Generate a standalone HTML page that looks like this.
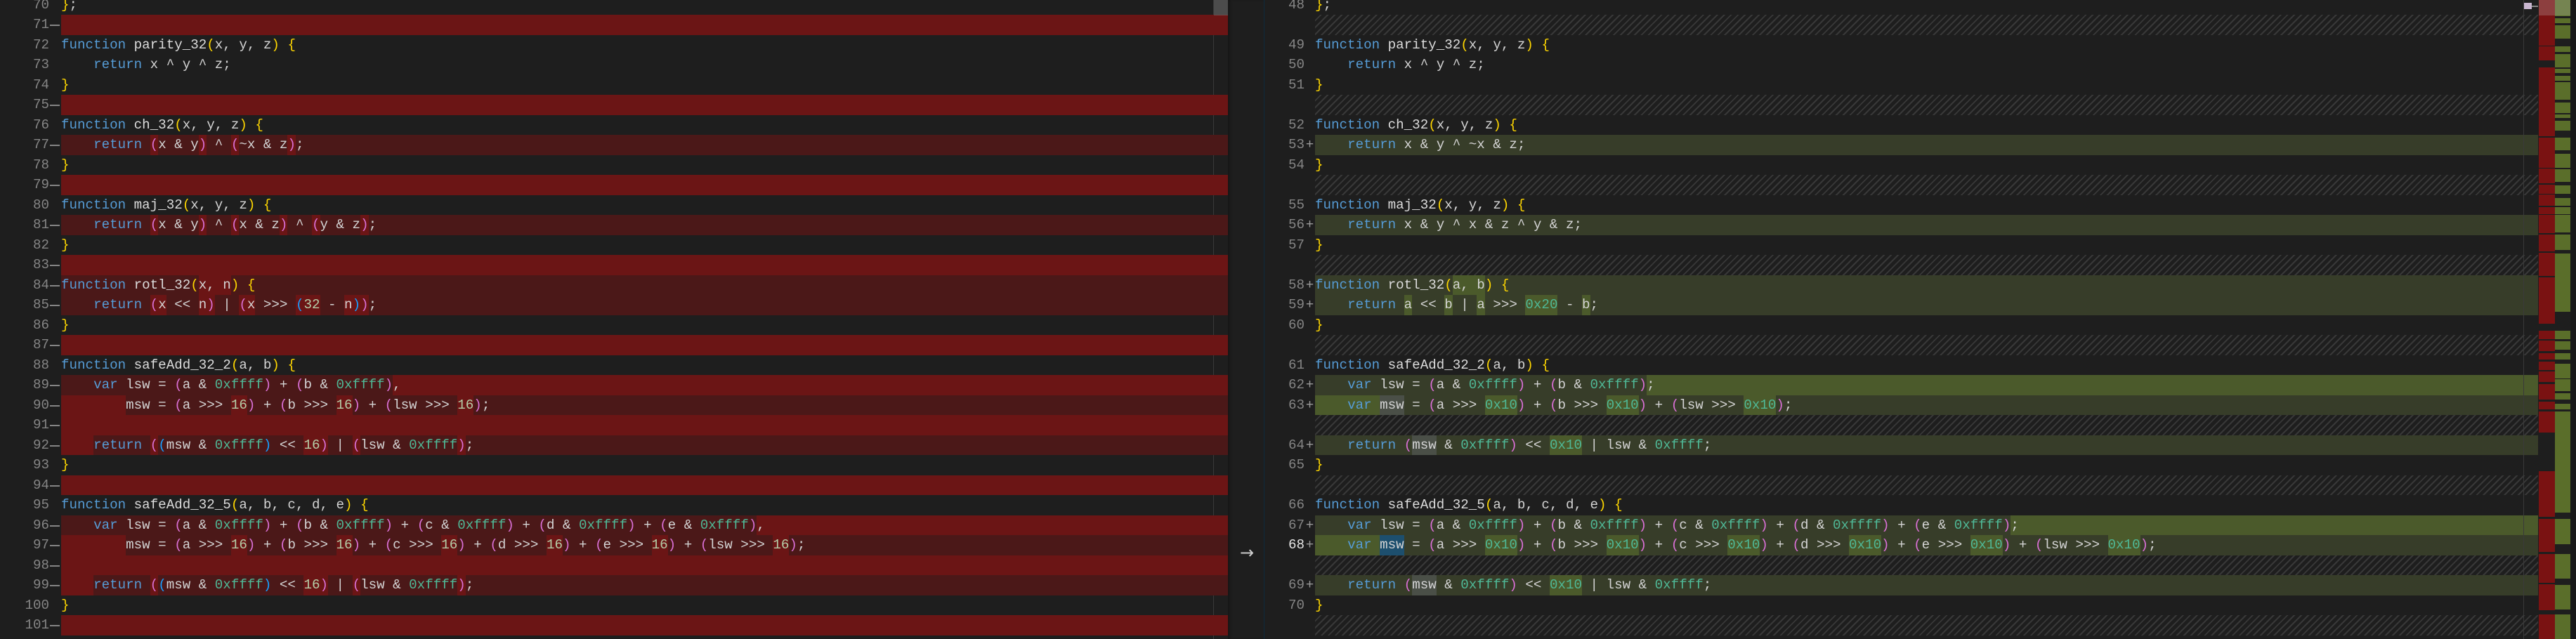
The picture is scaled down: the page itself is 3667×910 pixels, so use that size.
<!DOCTYPE html>
<html><head><meta charset="utf-8">
<style>
html,body{margin:0;padding:0;background:#1e1e1e;}
body{width:3667px;height:910px;overflow:hidden;position:relative;font-family:"Liberation Mono",monospace;font-size:19.2px;color:#d4d4d4;}
.r{position:absolute;height:28.5px;line-height:28.5px;white-space:pre;overflow:hidden;}
.L{left:87px;width:1661px;}
.R{left:1872px;width:1741px;}
.ln{position:absolute;height:28.5px;line-height:28.5px;color:#858585;text-align:right;}
.lnL{left:0;width:70px;}
.lnR{left:1800px;width:57px;}
.mk{position:absolute;left:71px;width:14px;height:2px;background:#858585;}
.pl{position:absolute;left:1857px;width:15px;height:28.5px;line-height:28.5px;color:#9a9a9a;text-align:center;}
.full{background:#6b1515;}
.chg{background:#4b1818;}
.add{background:#373d29;}
.hat{background:repeating-linear-gradient(135deg,#1e1e1e 0 5px,#383838 5px 7px);}
.D{display:inline-block;height:28.5px;background:#6b1515;vertical-align:top;}
.A{display:inline-block;height:28.5px;background:#4b5a2b;vertical-align:top;}
.G{display:inline-block;height:28.5px;background:#4a4f47;vertical-align:top;}
.S{display:inline-block;height:28.5px;background:#1d4f6e;vertical-align:top;}
.k{color:#569cd6}.f{color:#dcdcdc}.b{color:#ffd700}.p{color:#da70d6}.q{color:#179fff}.n{color:#4fb896}.d{color:#b5cea8}
.tail{display:inline-block;width:3000px;height:28.5px;vertical-align:top;}
</style></head><body>

<div style="position:absolute;left:1727px;top:0;width:1px;height:910px;background:#3a3a3a;"></div>
<div style="position:absolute;left:1748px;top:0;width:51px;height:910px;background:#1e1e1e;box-shadow:inset 4px 0 4px -2px #141414;"></div>
<div style="position:absolute;left:1799px;top:0;width:1px;height:910px;background:#0e2a3e;"></div>
<div style="position:absolute;left:1760px;top:772px;width:30px;text-align:center;color:#cfcfcf;font-family:'DejaVu Sans',sans-serif;font-size:24px;line-height:30px;">→</div>

<div class="ln lnL" style="top:-7.5px">70</div><div class="r L" style="top:-7.5px"><span class="b">}</span>;</div>
<div class="ln lnL" style="top:21px">71</div><div class="mk" style="top:35px"></div><div class="r L full" style="top:21px"></div>
<div class="ln lnL" style="top:49.5px">72</div><div class="r L" style="top:49.5px"><span class="k">function</span> <span class="f">parity_32</span><span class="b">(</span>x, y, z<span class="b">)</span> <span class="b">{</span></div>
<div class="ln lnL" style="top:78px">73</div><div class="r L" style="top:78px">    <span class="k">return</span> x ^ y ^ z;</div>
<div class="ln lnL" style="top:106.5px">74</div><div class="r L" style="top:106.5px"><span class="b">}</span></div>
<div class="ln lnL" style="top:135px">75</div><div class="mk" style="top:149px"></div><div class="r L full" style="top:135px"></div>
<div class="ln lnL" style="top:163.5px">76</div><div class="r L" style="top:163.5px"><span class="k">function</span> <span class="f">ch_32</span><span class="b">(</span>x, y, z<span class="b">)</span> <span class="b">{</span></div>
<div class="ln lnL" style="top:192px">77</div><div class="mk" style="top:206px"></div><div class="r L chg" style="top:192px">    <span class="k">return</span> <span class="D"><span class="p">(</span></span>x &amp; y<span class="D"><span class="p">)</span></span> ^ <span class="D"><span class="p">(</span></span>~x &amp; z<span class="D"><span class="p">)</span></span>;</div>
<div class="ln lnL" style="top:220.5px">78</div><div class="r L" style="top:220.5px"><span class="b">}</span></div>
<div class="ln lnL" style="top:249px">79</div><div class="mk" style="top:263px"></div><div class="r L full" style="top:249px"></div>
<div class="ln lnL" style="top:277.5px">80</div><div class="r L" style="top:277.5px"><span class="k">function</span> <span class="f">maj_32</span><span class="b">(</span>x, y, z<span class="b">)</span> <span class="b">{</span></div>
<div class="ln lnL" style="top:306px">81</div><div class="mk" style="top:320px"></div><div class="r L chg" style="top:306px">    <span class="k">return</span> <span class="D"><span class="p">(</span></span>x &amp; y<span class="D"><span class="p">)</span></span> ^ <span class="D"><span class="p">(</span></span>x &amp; z<span class="D"><span class="p">)</span></span> ^ <span class="D"><span class="p">(</span></span>y &amp; z<span class="D"><span class="p">)</span></span>;</div>
<div class="ln lnL" style="top:334.5px">82</div><div class="r L" style="top:334.5px"><span class="b">}</span></div>
<div class="ln lnL" style="top:363px">83</div><div class="mk" style="top:377px"></div><div class="r L full" style="top:363px"></div>
<div class="ln lnL" style="top:391.5px">84</div><div class="mk" style="top:405.5px"></div><div class="r L chg" style="top:391.5px"><span class="k">function</span> <span class="f">rotl_32</span><span class="b">(</span><span class="D">x, n</span><span class="b">)</span> <span class="b">{</span></div>
<div class="ln lnL" style="top:420px">85</div><div class="mk" style="top:434px"></div><div class="r L chg" style="top:420px">    <span class="k">return</span> <span class="D"><span class="p">(</span>x</span> &lt;&lt; <span class="D">n<span class="p">)</span></span> | <span class="D"><span class="p">(</span>x</span> &gt;&gt;&gt; <span class="D"><span class="q">(</span><span class="d">32</span></span> - <span class="D">n<span class="q">)</span><span class="p">)</span></span>;</div>
<div class="ln lnL" style="top:448.5px">86</div><div class="r L" style="top:448.5px"><span class="b">}</span></div>
<div class="ln lnL" style="top:477px">87</div><div class="mk" style="top:491px"></div><div class="r L full" style="top:477px"></div>
<div class="ln lnL" style="top:505.5px">88</div><div class="r L" style="top:505.5px"><span class="k">function</span> <span class="f">safeAdd_32_2</span><span class="b">(</span>a, b<span class="b">)</span> <span class="b">{</span></div>
<div class="ln lnL" style="top:534px">89</div><div class="mk" style="top:548px"></div><div class="r L chg" style="top:534px">    <span class="k">var</span> lsw = <span class="p">(</span>a &amp; <span class="n">0xffff</span><span class="p">)</span> + <span class="p">(</span>b &amp; <span class="n">0xffff</span><span class="p">)</span><span class="D">,</span><span class="D tail"></span></div>
<div class="ln lnL" style="top:562.5px">90</div><div class="mk" style="top:576.5px"></div><div class="r L chg" style="top:562.5px"><span class="D">        </span>msw = <span class="p">(</span>a &gt;&gt;&gt; <span class="D"><span class="d">16</span></span><span class="p">)</span> + <span class="p">(</span>b &gt;&gt;&gt; <span class="D"><span class="d">16</span></span><span class="p">)</span> + <span class="p">(</span>lsw &gt;&gt;&gt; <span class="D"><span class="d">16</span></span><span class="p">)</span>;</div>
<div class="ln lnL" style="top:591px">91</div><div class="mk" style="top:605px"></div><div class="r L full" style="top:591px"></div>
<div class="ln lnL" style="top:619.5px">92</div><div class="mk" style="top:633.5px"></div><div class="r L chg" style="top:619.5px"><span class="D">    </span><span class="k">return</span> <span class="D"><span class="p">(</span></span><span class="q">(</span>msw &amp; <span class="n">0xffff</span><span class="q">)</span> &lt;&lt; <span class="D"><span class="d">16</span><span class="p">)</span></span> | <span class="D"><span class="p">(</span></span>lsw &amp; <span class="n">0xffff</span><span class="D"><span class="p">)</span></span>;</div>
<div class="ln lnL" style="top:648px">93</div><div class="r L" style="top:648px"><span class="b">}</span></div>
<div class="ln lnL" style="top:676.5px">94</div><div class="mk" style="top:690.5px"></div><div class="r L full" style="top:676.5px"></div>
<div class="ln lnL" style="top:705px">95</div><div class="r L" style="top:705px"><span class="k">function</span> <span class="f">safeAdd_32_5</span><span class="b">(</span>a, b, c, d, e<span class="b">)</span> <span class="b">{</span></div>
<div class="ln lnL" style="top:733.5px">96</div><div class="mk" style="top:747.5px"></div><div class="r L chg" style="top:733.5px">    <span class="k">var</span> lsw = <span class="p">(</span>a &amp; <span class="n">0xffff</span><span class="p">)</span> + <span class="p">(</span>b &amp; <span class="n">0xffff</span><span class="p">)</span> + <span class="p">(</span>c &amp; <span class="n">0xffff</span><span class="p">)</span> + <span class="p">(</span>d &amp; <span class="n">0xffff</span><span class="p">)</span> + <span class="p">(</span>e &amp; <span class="n">0xffff</span><span class="p">)</span><span class="D">,</span><span class="D tail"></span></div>
<div class="ln lnL" style="top:762px">97</div><div class="mk" style="top:776px"></div><div class="r L chg" style="top:762px"><span class="D">        </span>msw = <span class="p">(</span>a &gt;&gt;&gt; <span class="D"><span class="d">16</span></span><span class="p">)</span> + <span class="p">(</span>b &gt;&gt;&gt; <span class="D"><span class="d">16</span></span><span class="p">)</span> + <span class="p">(</span>c &gt;&gt;&gt; <span class="D"><span class="d">16</span></span><span class="p">)</span> + <span class="p">(</span>d &gt;&gt;&gt; <span class="D"><span class="d">16</span></span><span class="p">)</span> + <span class="p">(</span>e &gt;&gt;&gt; <span class="D"><span class="d">16</span></span><span class="p">)</span> + <span class="p">(</span>lsw &gt;&gt;&gt; <span class="D"><span class="d">16</span></span><span class="p">)</span>;</div>
<div class="ln lnL" style="top:790.5px">98</div><div class="mk" style="top:804.5px"></div><div class="r L full" style="top:790.5px"></div>
<div class="ln lnL" style="top:819px">99</div><div class="mk" style="top:833px"></div><div class="r L chg" style="top:819px"><span class="D">    </span><span class="k">return</span> <span class="D"><span class="p">(</span></span><span class="q">(</span>msw &amp; <span class="n">0xffff</span><span class="q">)</span> &lt;&lt; <span class="D"><span class="d">16</span><span class="p">)</span></span> | <span class="D"><span class="p">(</span></span>lsw &amp; <span class="n">0xffff</span><span class="D"><span class="p">)</span></span>;</div>
<div class="ln lnL" style="top:847.5px">100</div><div class="r L" style="top:847.5px"><span class="b">}</span></div>
<div class="ln lnL" style="top:876px">101</div><div class="mk" style="top:890px"></div><div class="r L full" style="top:876px"></div>

<div style="position:absolute;left:1728px;top:0;width:20px;height:22px;background:rgba(121,121,121,0.5);"></div>

<div class="ln lnR" style="top:-7.5px">48</div><div class="r R" style="top:-7.5px"><span class="b">}</span>;</div>
<div class="r R hat" style="top:21px"></div>
<div class="ln lnR" style="top:49.5px">49</div><div class="r R" style="top:49.5px"><span class="k">function</span> <span class="f">parity_32</span><span class="b">(</span>x, y, z<span class="b">)</span> <span class="b">{</span></div>
<div class="ln lnR" style="top:78px">50</div><div class="r R" style="top:78px">    <span class="k">return</span> x ^ y ^ z;</div>
<div class="ln lnR" style="top:106.5px">51</div><div class="r R" style="top:106.5px"><span class="b">}</span></div>
<div class="r R hat" style="top:135px"></div>
<div class="ln lnR" style="top:163.5px">52</div><div class="r R" style="top:163.5px"><span class="k">function</span> <span class="f">ch_32</span><span class="b">(</span>x, y, z<span class="b">)</span> <span class="b">{</span></div>
<div class="ln lnR" style="top:192px">53</div><div class="pl" style="top:192px">+</div><div class="r R add" style="top:192px">    <span class="k">return</span> x &amp; y ^ ~x &amp; z;</div>
<div class="ln lnR" style="top:220.5px">54</div><div class="r R" style="top:220.5px"><span class="b">}</span></div>
<div class="r R hat" style="top:249px"></div>
<div class="ln lnR" style="top:277.5px">55</div><div class="r R" style="top:277.5px"><span class="k">function</span> <span class="f">maj_32</span><span class="b">(</span>x, y, z<span class="b">)</span> <span class="b">{</span></div>
<div class="ln lnR" style="top:306px">56</div><div class="pl" style="top:306px">+</div><div class="r R add" style="top:306px">    <span class="k">return</span> x &amp; y ^ x &amp; z ^ y &amp; z;</div>
<div class="ln lnR" style="top:334.5px">57</div><div class="r R" style="top:334.5px"><span class="b">}</span></div>
<div class="r R hat" style="top:363px"></div>
<div class="ln lnR" style="top:391.5px">58</div><div class="pl" style="top:391.5px">+</div><div class="r R add" style="top:391.5px"><span class="k">function</span> <span class="f">rotl_32</span><span class="b">(</span><span class="A">a, b</span><span class="b">)</span> <span class="b">{</span></div>
<div class="ln lnR" style="top:420px">59</div><div class="pl" style="top:420px">+</div><div class="r R add" style="top:420px">    <span class="k">return</span> <span class="A">a</span> &lt;&lt; <span class="A">b</span> | <span class="A">a</span> &gt;&gt;&gt; <span class="A"><span class="n">0x20</span></span> - <span class="A">b</span>;</div>
<div class="ln lnR" style="top:448.5px">60</div><div class="r R" style="top:448.5px"><span class="b">}</span></div>
<div class="r R hat" style="top:477px"></div>
<div class="ln lnR" style="top:505.5px">61</div><div class="r R" style="top:505.5px"><span class="k">function</span> <span class="f">safeAdd_32_2</span><span class="b">(</span>a, b<span class="b">)</span> <span class="b">{</span></div>
<div class="ln lnR" style="top:534px">62</div><div class="pl" style="top:534px">+</div><div class="r R add" style="top:534px">    <span class="k">var</span> lsw = <span class="p">(</span>a &amp; <span class="n">0xffff</span><span class="p">)</span> + <span class="p">(</span>b &amp; <span class="n">0xffff</span><span class="p">)</span><span class="A">;</span><span class="A tail"></span></div>
<div class="ln lnR" style="top:562.5px">63</div><div class="pl" style="top:562.5px">+</div><div class="r R add" style="top:562.5px"><span class="A">    <span class="k">var</span> </span><span class="G">msw</span> = <span class="p">(</span>a &gt;&gt;&gt; <span class="A"><span class="n">0x10</span></span><span class="p">)</span> + <span class="p">(</span>b &gt;&gt;&gt; <span class="A"><span class="n">0x10</span></span><span class="p">)</span> + <span class="p">(</span>lsw &gt;&gt;&gt; <span class="A"><span class="n">0x10</span></span><span class="p">)</span>;</div>
<div class="r R hat" style="top:591px"></div>
<div class="ln lnR" style="top:619.5px">64</div><div class="pl" style="top:619.5px">+</div><div class="r R add" style="top:619.5px">    <span class="k">return</span> <span class="p">(</span><span class="G">msw</span> &amp; <span class="n">0xffff</span><span class="p">)</span> &lt;&lt; <span class="A"><span class="n">0x10</span></span> | lsw &amp; <span class="n">0xffff</span>;</div>
<div class="ln lnR" style="top:648px">65</div><div class="r R" style="top:648px"><span class="b">}</span></div>
<div class="r R hat" style="top:676.5px"></div>
<div class="ln lnR" style="top:705px">66</div><div class="r R" style="top:705px"><span class="k">function</span> <span class="f">safeAdd_32_5</span><span class="b">(</span>a, b, c, d, e<span class="b">)</span> <span class="b">{</span></div>
<div class="ln lnR" style="top:733.5px">67</div><div class="pl" style="top:733.5px">+</div><div class="r R add" style="top:733.5px">    <span class="k">var</span> lsw = <span class="p">(</span>a &amp; <span class="n">0xffff</span><span class="p">)</span> + <span class="p">(</span>b &amp; <span class="n">0xffff</span><span class="p">)</span> + <span class="p">(</span>c &amp; <span class="n">0xffff</span><span class="p">)</span> + <span class="p">(</span>d &amp; <span class="n">0xffff</span><span class="p">)</span> + <span class="p">(</span>e &amp; <span class="n">0xffff</span><span class="p">)</span><span class="A">;</span><span class="A tail"></span></div>
<div class="ln lnR" style="top:762px;color:#e6e6e6">68</div><div class="pl" style="top:762px">+</div><div class="r R add" style="top:762px"><span class="A">    <span class="k">var</span> </span><span class="S">msw</span> = <span class="p">(</span>a &gt;&gt;&gt; <span class="A"><span class="n">0x10</span></span><span class="p">)</span> + <span class="p">(</span>b &gt;&gt;&gt; <span class="A"><span class="n">0x10</span></span><span class="p">)</span> + <span class="p">(</span>c &gt;&gt;&gt; <span class="A"><span class="n">0x10</span></span><span class="p">)</span> + <span class="p">(</span>d &gt;&gt;&gt; <span class="A"><span class="n">0x10</span></span><span class="p">)</span> + <span class="p">(</span>e &gt;&gt;&gt; <span class="A"><span class="n">0x10</span></span><span class="p">)</span> + <span class="p">(</span>lsw &gt;&gt;&gt; <span class="A"><span class="n">0x10</span></span><span class="p">)</span>;</div>
<div class="r R hat" style="top:790.5px"></div>
<div class="ln lnR" style="top:819px">69</div><div class="pl" style="top:819px">+</div><div class="r R add" style="top:819px">    <span class="k">return</span> <span class="p">(</span><span class="G">msw</span> &amp; <span class="n">0xffff</span><span class="p">)</span> &lt;&lt; <span class="A"><span class="n">0x10</span></span> | lsw &amp; <span class="n">0xffff</span>;</div>
<div class="ln lnR" style="top:847.5px">70</div><div class="r R" style="top:847.5px"><span class="b">}</span></div>
<div class="r R hat" style="top:876px"></div>

<div style="position:absolute;left:3592px;top:0;width:1px;height:910px;background:#3a3a3a;"></div>
<div style="position:absolute;left:3593px;top:4px;width:11px;height:9px;background:#c9b6d0;"></div>
<div style="position:absolute;left:3604px;top:8px;width:10px;height:2px;background:#888;"></div>
<div style="position:absolute;left:3613px;top:0;width:54px;height:910px;background:#1e1e1e;"></div>
<div style="position:absolute;left:3659px;top:0;width:8px;height:910px;background:#181818;"></div>
<div style="position:absolute;left:3614px;top:0;width:23px;height:35px;background:#7a1212;"></div>
<div style="position:absolute;left:3614px;top:35px;width:23px;height:30px;background:#7a1212;"></div>
<div style="position:absolute;left:3614px;top:66px;width:23px;height:20px;background:#7a1212;"></div>
<div style="position:absolute;left:3614px;top:96px;width:23px;height:98px;background:#7a1212;"></div>
<div style="position:absolute;left:3614px;top:196px;width:23px;height:43px;background:#7a1212;"></div>
<div style="position:absolute;left:3614px;top:240px;width:23px;height:21px;background:#7a1212;"></div>
<div style="position:absolute;left:3614px;top:263px;width:23px;height:13px;background:#7a1212;"></div>
<div style="position:absolute;left:3614px;top:277px;width:23px;height:16px;background:#7a1212;"></div>
<div style="position:absolute;left:3614px;top:295px;width:23px;height:10px;background:#7a1212;"></div>
<div style="position:absolute;left:3614px;top:306px;width:23px;height:26px;background:#7a1212;"></div>
<div style="position:absolute;left:3614px;top:334px;width:23px;height:24px;background:#7a1212;"></div>
<div style="position:absolute;left:3614px;top:360px;width:23px;height:33px;background:#7a1212;"></div>
<div style="position:absolute;left:3614px;top:395px;width:23px;height:66px;background:#7a1212;"></div>
<div style="position:absolute;left:3614px;top:471px;width:23px;height:12px;background:#7a1212;"></div>
<div style="position:absolute;left:3614px;top:485px;width:23px;height:15px;background:#7a1212;"></div>
<div style="position:absolute;left:3614px;top:503px;width:23px;height:9px;background:#7a1212;"></div>
<div style="position:absolute;left:3614px;top:515px;width:23px;height:12px;background:#7a1212;"></div>
<div style="position:absolute;left:3614px;top:529px;width:23px;height:15px;background:#7a1212;"></div>
<div style="position:absolute;left:3614px;top:547px;width:23px;height:22px;background:#7a1212;"></div>
<div style="position:absolute;left:3614px;top:572px;width:23px;height:11px;background:#7a1212;"></div>
<div style="position:absolute;left:3614px;top:586px;width:23px;height:30px;background:#7a1212;"></div>
<div style="position:absolute;left:3614px;top:671px;width:23px;height:65px;background:#7a1212;"></div>
<div style="position:absolute;left:3614px;top:739px;width:23px;height:47px;background:#7a1212;"></div>
<div style="position:absolute;left:3614px;top:789px;width:23px;height:41px;background:#7a1212;"></div>
<div style="position:absolute;left:3614px;top:832px;width:23px;height:37px;background:#7a1212;"></div>
<div style="position:absolute;left:3614px;top:875px;width:23px;height:35px;background:#7a1212;"></div>
<div style="position:absolute;left:3637px;top:0;width:22px;height:23px;background:#5a6e2a;"></div>
<div style="position:absolute;left:3637px;top:26px;width:22px;height:7px;background:#5a6e2a;"></div>
<div style="position:absolute;left:3637px;top:36px;width:22px;height:19px;background:#5a6e2a;"></div>
<div style="position:absolute;left:3637px;top:66px;width:22px;height:8px;background:#5a6e2a;"></div>
<div style="position:absolute;left:3637px;top:77px;width:22px;height:19px;background:#5a6e2a;"></div>
<div style="position:absolute;left:3637px;top:98px;width:22px;height:6px;background:#5a6e2a;"></div>
<div style="position:absolute;left:3637px;top:108px;width:22px;height:7px;background:#5a6e2a;"></div>
<div style="position:absolute;left:3637px;top:117px;width:22px;height:25px;background:#5a6e2a;"></div>
<div style="position:absolute;left:3637px;top:146px;width:22px;height:15px;background:#5a6e2a;"></div>
<div style="position:absolute;left:3637px;top:163px;width:22px;height:5px;background:#5a6e2a;"></div>
<div style="position:absolute;left:3637px;top:172px;width:22px;height:14px;background:#5a6e2a;"></div>
<div style="position:absolute;left:3637px;top:196px;width:22px;height:18px;background:#5a6e2a;"></div>
<div style="position:absolute;left:3637px;top:219px;width:22px;height:20px;background:#5a6e2a;"></div>
<div style="position:absolute;left:3637px;top:241px;width:22px;height:18px;background:#5a6e2a;"></div>
<div style="position:absolute;left:3637px;top:264px;width:22px;height:12px;background:#5a6e2a;"></div>
<div style="position:absolute;left:3637px;top:282px;width:22px;height:11px;background:#5a6e2a;"></div>
<div style="position:absolute;left:3637px;top:295px;width:22px;height:10px;background:#5a6e2a;"></div>
<div style="position:absolute;left:3637px;top:306px;width:22px;height:25px;background:#5a6e2a;"></div>
<div style="position:absolute;left:3637px;top:334px;width:22px;height:22px;background:#5a6e2a;"></div>
<div style="position:absolute;left:3637px;top:361px;width:22px;height:83px;background:#5a6e2a;"></div>
<div style="position:absolute;left:3637px;top:471px;width:22px;height:12px;background:#5a6e2a;"></div>
<div style="position:absolute;left:3637px;top:486px;width:22px;height:12px;background:#5a6e2a;"></div>
<div style="position:absolute;left:3637px;top:503px;width:22px;height:9px;background:#5a6e2a;"></div>
<div style="position:absolute;left:3637px;top:518px;width:22px;height:21px;background:#5a6e2a;"></div>
<div style="position:absolute;left:3637px;top:540px;width:22px;height:17px;background:#5a6e2a;"></div>
<div style="position:absolute;left:3637px;top:560px;width:22px;height:9px;background:#5a6e2a;"></div>
<div style="position:absolute;left:3637px;top:575px;width:22px;height:8px;background:#5a6e2a;"></div>
<div style="position:absolute;left:3637px;top:586px;width:22px;height:144px;background:#5a6e2a;"></div>
<div style="position:absolute;left:3637px;top:739px;width:22px;height:36px;background:#5a6e2a;"></div>
<div style="position:absolute;left:3637px;top:789px;width:22px;height:35px;background:#5a6e2a;"></div>
<div style="position:absolute;left:3637px;top:833px;width:22px;height:35px;background:#5a6e2a;"></div>
<div style="position:absolute;left:3637px;top:875px;width:22px;height:35px;background:#5a6e2a;"></div>
<div style="position:absolute;left:3614px;top:0;width:45px;height:22px;background:rgba(200,200,200,0.25);"></div>
</body></html>
